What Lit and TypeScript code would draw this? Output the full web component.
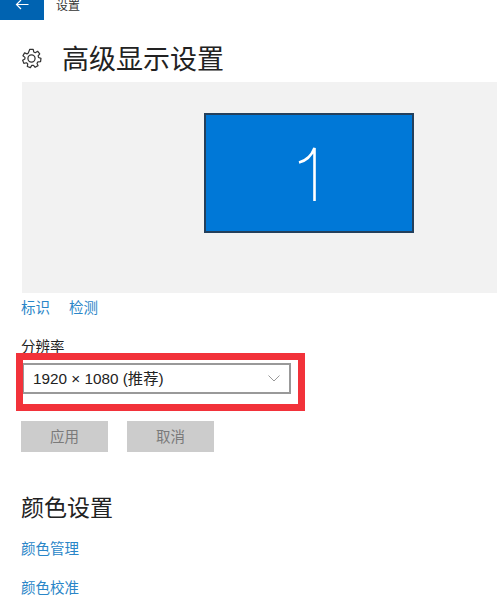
import { LitElement, html, css } from "lit";
import { customElement } from "lit/decorators.js";

@customElement("app-root")
export class AppRoot extends LitElement {
  static styles = css`
    :host {
      display: block;
      width: 497px;
      height: 600px;
      overflow: hidden;
      background: #fff;
      font-family: "Noto Sans CJK SC", "Liberation Sans", sans-serif;
      color: #1a1a1a;
    }
    .topbar { display: flex; align-items: flex-start; height: 20px; }
    .back {
      width: 44px; height: 20px; background: #0063b1;
      display: flex; align-items: flex-start; justify-content: center;
    }
    .back svg { display: block; }
    .apptitle { margin-left: 12px; font-size: 12px; line-height: 12px; margin-top: -1px; color: #333; }
    .head {
      display: flex; align-items: center; gap: 20px;
      height: 40px; margin: 18px 0 0 21px;
    }
    .head svg { display: block; }
    .head h1 { margin: 0; font-size: 27px; font-weight: 400; line-height: 40px; color: #222; }
    .preview {
      margin: 4px 0 0 22px; height: 211px; background: #f2f2f2;
      display: flex; padding: 31px 0 0 182px; box-sizing: border-box;
    }
    .monitor {
      width: 210px; height: 120px; box-sizing: border-box;
      background: #0078d7; border: 2px solid #24405c;
      color: #fff; display: flex; align-items: center; justify-content: center;
    }
    .monitor svg { display: block; }
    .links { display: flex; gap: 19px; margin: 4px 0 0 21px; height: 20px; }
    a { color: #2a86c8; font-size: 14.5px; line-height: 20px; text-decoration: none; display: block; }
    .label { margin: 19px 0 0 21px; font-size: 14.5px; line-height: 20px; color: #222; height: 20px; }
    .field { position: relative; margin: 7px 0 0 22px; width: 269px; }
    .select {
      height: 31px; box-sizing: border-box; border: 2px solid #999; background: #fff;
      display: flex; align-items: center; justify-content: space-between;
      padding: 0 9px 3px 9px; font-size: 15.3px; color: #222;
      font-family: "Liberation Sans", "Noto Sans CJK SC", sans-serif;
    }
    .select svg { display: block; margin-top: 3px; }
    .mark {
      position: absolute; left: -6px; top: -10px; width: 289px; height: 58px;
      box-sizing: border-box; border: 7px solid #f2323a; pointer-events: none;
    }
    .buttons { display: flex; gap: 19px; margin: 27px 0 0 21px; }
    .btn {
      width: 87px; height: 31px; background: #ccc; color: #7a7a7a;
      font-size: 14.5px; line-height: 29px; padding-bottom: 2px; box-sizing: border-box;
      display: flex; align-items: center; justify-content: center;
    }
    h2 { margin: 37px 0 0 21px; font-size: 23px; font-weight: 400; line-height: 34px; color: #222; }
    .l1 { margin: 15px 0 0 21px; }
    .l2 { margin: 19px 0 0 21px; }
  `;

  render() {
    return html`
      <div class="topbar">
        <div class="back">
          <svg width="14" height="14" viewBox="0 0 14 14" fill="none" stroke="#fff" stroke-width="1.2">
            <path d="M1.5 4.5H13.5M6 0L1.5 4.5L6 9" />
          </svg>
        </div>
        <div class="apptitle">设置</div>
      </div>
      <div class="head">
        <svg width="21" height="21" viewBox="0 0 20 20" fill="none" stroke="#333" stroke-width="1.2" stroke-linejoin="round">
          <path d="M8.3 1.2h3.4l.5 2.6 1.5.7 2.3-1.4 2.1 2.5-1.6 2 .4 1.6 2.4.9v0l-.4 3.1-2.6.3-.9 1.4 1 2.3-2.8 1.6-1.7-1.9-1.6.1-1.4 2.2-3-1.1.4-2.6-1.2-1.1-2.6.6-1.2-3 2.2-1.3.1-1.6-2-1.6 1.6-2.8 2.4 1 1.3-1z" transform="translate(0.3 0.1) scale(0.97)" />
          <circle cx="10" cy="10" r="3.4" />
        </svg>
        <h1>高级显示设置</h1>
      </div>
      <div class="preview">
        <div class="monitor">
          <svg width="24" height="56" viewBox="0 0 24 56" fill="none" stroke="#fff" stroke-width="2.6">
            <path d="M2 17.5C8 16 14 12 17.5 3V56" />
          </svg>
        </div>
      </div>
      <div class="links"><a>标识</a><a>检测</a></div>
      <div class="label">分辨率</div>
      <div class="field">
        <div class="select">
          <span>1920 × 1080 (推荐)</span>
          <svg width="12" height="7" viewBox="0 0 12 7" fill="none" stroke="#999" stroke-width="1">
            <path d="M0.5 0.5L6 6L11.5 0.5" />
          </svg>
        </div>
        <div class="mark"></div>
      </div>
      <div class="buttons">
        <div class="btn">应用</div>
        <div class="btn">取消</div>
      </div>
      <h2>颜色设置</h2>
      <a class="l1">颜色管理</a>
      <a class="l2">颜色校准</a>
    `;
  }
}
